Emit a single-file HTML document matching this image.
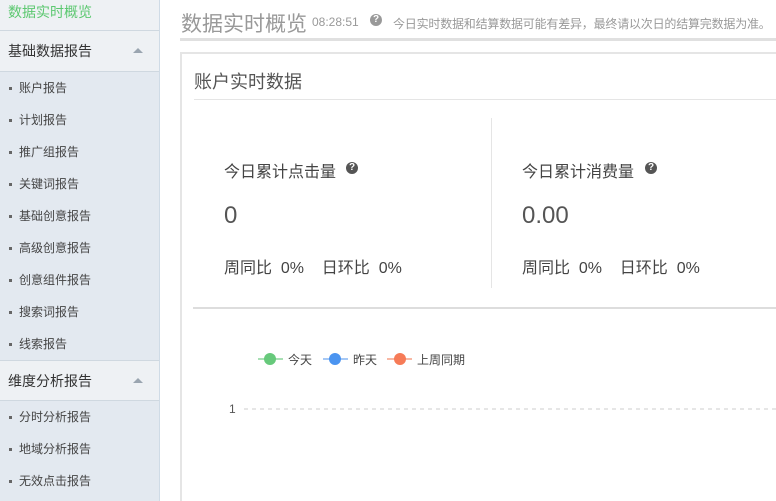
<!DOCTYPE html><html><head><meta charset="utf-8"><style>
*{margin:0;padding:0;box-sizing:border-box}
html,body{width:776px;height:501px;overflow:hidden}
body{background:#fff;font-family:"Liberation Sans","Noto Sans CJK SC",sans-serif;position:relative}
.sb{position:absolute;left:0;top:0;width:160px;height:501px;background:#e3e9f0;border-right:1px solid #cfdbe6}
.top{height:31px;background:#eef1f4;border-bottom:1px solid #cfd8e0;color:#5cc870;font-size:14px;padding:2px 0 0 8px;line-height:20px}
.sec{height:41px;background:#eef1f4;border-bottom:1px solid #cfd8e0;font-size:14px;color:#333;padding-left:8px;line-height:40px;position:relative}
.sec:after{content:"";position:absolute;left:133px;top:17px;border-left:5px solid transparent;border-right:5px solid transparent;border-bottom:5px solid #9aa5b0}
.it{height:32px;line-height:32px;font-size:12px;color:#444;padding-left:19px;position:relative}
.it:before{content:"";position:absolute;left:9px;top:15px;width:3px;height:3px;background:#666}
.abs{position:absolute;white-space:nowrap}
</style></head><body>
<div class="sb">
<div class="top">数据实时概览</div>
<div class="sec">基础数据报告</div>
<div class="it">账户报告</div><div class="it">计划报告</div><div class="it">推广组报告</div><div class="it">关键词报告</div><div class="it">基础创意报告</div><div class="it">高级创意报告</div><div class="it">创意组件报告</div><div class="it">搜索词报告</div><div class="it">线索报告</div>
<div class="sec" style="border-top:1px solid #cfd8e0">维度分析报告</div>
<div class="it">分时分析报告</div><div class="it">地域分析报告</div><div class="it">无效点击报告</div>
</div>
<div class="abs" style="left:181px;top:8px;font-size:21px;color:#999">数据实时概览</div>
<div class="abs" style="left:312px;top:15px;font-size:12px;color:#999">08:28:51</div>
<div class="abs" style="left:370px;top:14px;width:12px;height:12px;border-radius:50%;background:#999;color:#fff;font-size:10px;line-height:12px;text-align:center;font-weight:bold">?</div>
<div class="abs" style="left:393px;top:15px;font-size:12px;color:#999;letter-spacing:-0.2px">今日实时数据和结算数据可能有差异，最终请以次日的结算完数据为准。</div>
<div class="abs" style="left:180px;top:38px;width:596px;height:3px;background:#e0e0e0"></div>
<div class="abs" style="left:180px;top:52px;width:600px;height:460px;border:2px solid #e5e5e5;border-right:none;border-bottom:none"></div>
<div class="abs" style="left:194px;top:68px;font-size:18px;color:#555">账户实时数据</div>
<div class="abs" style="left:194px;top:99px;width:582px;height:1px;background:#e5e5e5"></div>
<div class="abs" style="left:491px;top:118px;width:1px;height:170px;background:#e5e5e5"></div>
<div class="abs" style="left:224px;top:158px;font-size:16px;color:#444">今日累计点击量</div>
<div class="abs" style="left:346px;top:162px;width:12px;height:12px;border-radius:50%;background:#555;color:#fff;font-size:10px;line-height:12px;text-align:center;font-weight:bold">?</div>
<div class="abs" style="left:224px;top:202px;font-size:24px;color:#555">0</div>
<div class="abs" style="left:224px;top:254px;font-size:16px;color:#444">周同比&nbsp; 0%&nbsp;&nbsp;&nbsp; 日环比&nbsp; 0%</div>
<div class="abs" style="left:522px;top:158px;font-size:16px;color:#444">今日累计消费量</div>
<div class="abs" style="left:645px;top:162px;width:12px;height:12px;border-radius:50%;background:#555;color:#fff;font-size:10px;line-height:12px;text-align:center;font-weight:bold">?</div>
<div class="abs" style="left:522px;top:202px;font-size:24px;color:#555">0.00</div>
<div class="abs" style="left:522px;top:254px;font-size:16px;color:#444">周同比&nbsp; 0%&nbsp;&nbsp;&nbsp; 日环比&nbsp; 0%</div>
<div class="abs" style="left:193px;top:307px;width:583px;height:2px;background:#ddd"></div>
<svg class="abs" style="left:0;top:0" width="776" height="501">
<line x1="258" y1="359" x2="283" y2="359" stroke="#a8e0b4" stroke-width="2"/><circle cx="270" cy="359" r="6" fill="#67c97b"/>
<line x1="323" y1="359" x2="348" y2="359" stroke="#a5c8f5" stroke-width="2"/><circle cx="335" cy="359" r="6" fill="#4b94f0"/>
<line x1="387" y1="359" x2="412" y2="359" stroke="#f8b8a4" stroke-width="2"/><circle cx="400" cy="359" r="6" fill="#f67b57"/>
<text x="288" y="364" font-size="12" fill="#444" font-family="Liberation Sans,Noto Sans CJK SC,sans-serif">今天</text>
<text x="353" y="364" font-size="12" fill="#444" font-family="Liberation Sans,Noto Sans CJK SC,sans-serif">昨天</text>
<text x="417" y="364" font-size="12" fill="#444" font-family="Liberation Sans,Noto Sans CJK SC,sans-serif">上周同期</text>
<text x="229" y="413" font-size="12" fill="#555" font-family="Liberation Sans,sans-serif">1</text>
<line x1="244" y1="409" x2="776" y2="409" stroke="#ccc" stroke-dasharray="4,4"/>
</svg>
</body></html>
